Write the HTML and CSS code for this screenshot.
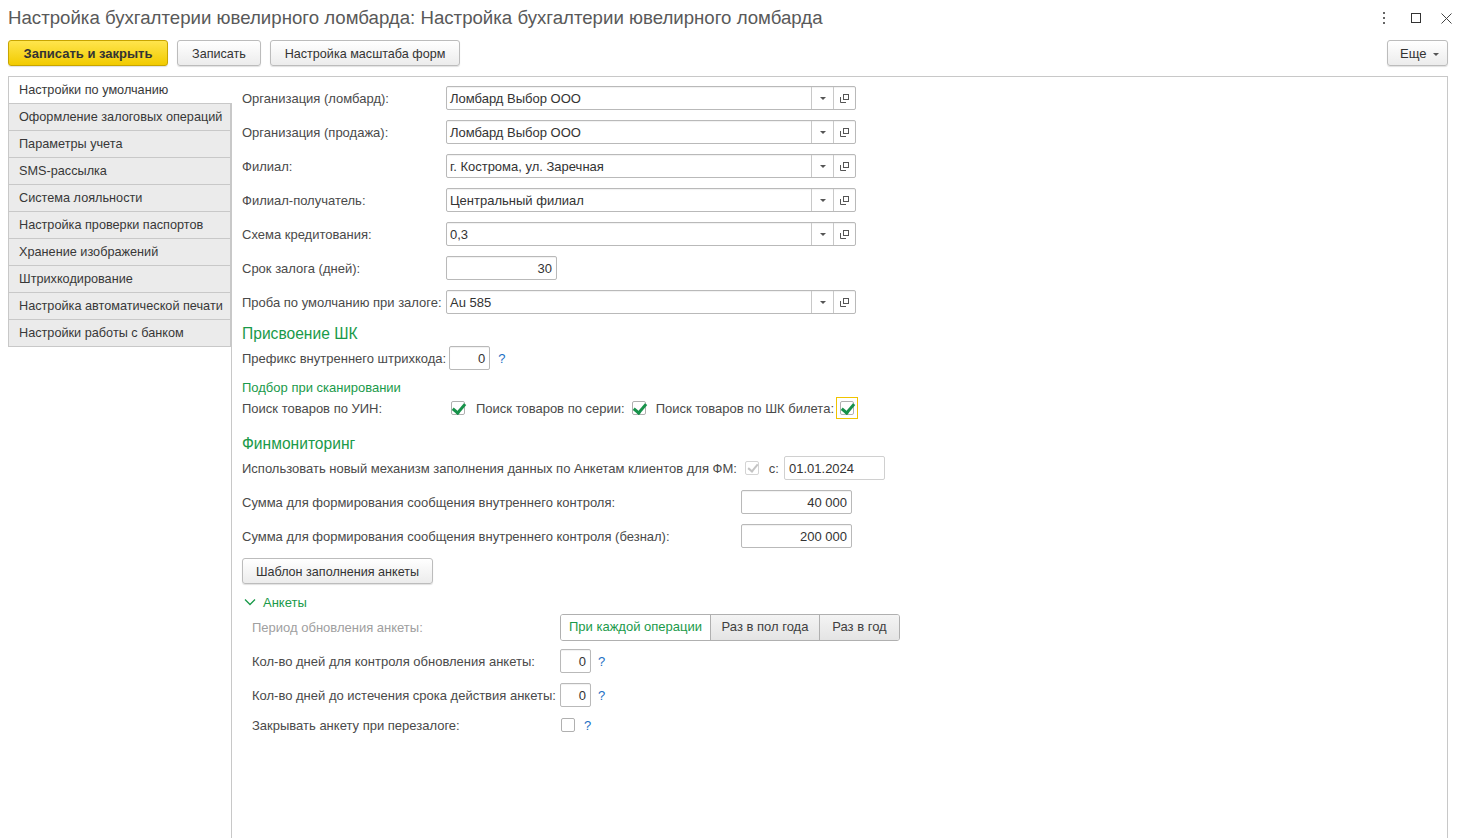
FILE: index.html
```html
<!DOCTYPE html>
<html lang="ru">
<head>
<meta charset="utf-8">
<title>Настройка бухгалтерии ювелирного ломбарда</title>
<link rel="stylesheet" href="styles.css">
</head>
<body>
<div class="titlebar">
  <div class="title">Настройка бухгалтерии ювелирного ломбарда: Настройка бухгалтерии ювелирного ломбарда</div>
  <div class="winctl">
    <svg class="ic-kebab" width="4" height="12" viewBox="0 0 4 12"><rect x="1" y="0" width="2" height="2" fill="#666"/><rect x="1" y="5" width="2" height="2" fill="#666"/><rect x="1" y="10" width="2" height="2" fill="#666"/></svg>
    <svg class="ic-max" width="10" height="10" viewBox="0 0 10 10"><rect x="0.5" y="0.5" width="9" height="9" fill="none" stroke="#333"/></svg>
    <svg class="ic-close" width="11" height="11" viewBox="0 0 11 11"><path d="M0.5 0.5L10.5 10.5M10.5 0.5L0.5 10.5" stroke="#444" stroke-width="1"/></svg>
  </div>
</div>

<div class="toolbar">
  <button class="btn btn-primary">Записать и закрыть</button>
  <button class="btn btn-save">Записать</button>
  <button class="btn btn-scale">Настройка масштаба форм</button>
  <div class="spacer"></div>
  <button class="btn btn-more">Еще <span class="caret"></span></button>
</div>

<div class="main">
  <div class="tabs">
    <div class="tab active">Настройки по умолчанию</div>
    <div class="tab">Оформление залоговых операций</div>
    <div class="tab">Параметры учета</div>
    <div class="tab">SMS-рассылка</div>
    <div class="tab">Система лояльности</div>
    <div class="tab">Настройка проверки паспортов</div>
    <div class="tab">Хранение изображений</div>
    <div class="tab">Штрихкодирование</div>
    <div class="tab">Настройка автоматической печати</div>
    <div class="tab">Настройки работы с банком</div>
  </div>

  <div class="panel">
    <div class="row">
      <div class="label w204">Организация (ломбард):</div>
      <div class="combo"><span class="val">Ломбард Выбор ООО</span><span class="cbtn"><i class="tri"></i></span><span class="cbtn"><svg width="9" height="9" viewBox="0 0 9 9"><rect x="3.5" y="0.5" width="5" height="5" fill="none" stroke="#555"/><path d="M0.5 3v5.5H6" fill="none" stroke="#555"/></svg></span></div>
    </div>
    <div class="row">
      <div class="label w204">Организация (продажа):</div>
      <div class="combo"><span class="val">Ломбард Выбор ООО</span><span class="cbtn"><i class="tri"></i></span><span class="cbtn"><svg width="9" height="9" viewBox="0 0 9 9"><rect x="3.5" y="0.5" width="5" height="5" fill="none" stroke="#555"/><path d="M0.5 3v5.5H6" fill="none" stroke="#555"/></svg></span></div>
    </div>
    <div class="row">
      <div class="label w204">Филиал:</div>
      <div class="combo"><span class="val">г. Кострома, ул. Заречная</span><span class="cbtn"><i class="tri"></i></span><span class="cbtn"><svg width="9" height="9" viewBox="0 0 9 9"><rect x="3.5" y="0.5" width="5" height="5" fill="none" stroke="#555"/><path d="M0.5 3v5.5H6" fill="none" stroke="#555"/></svg></span></div>
    </div>
    <div class="row">
      <div class="label w204">Филиал-получатель:</div>
      <div class="combo"><span class="val">Центральный филиал</span><span class="cbtn"><i class="tri"></i></span><span class="cbtn"><svg width="9" height="9" viewBox="0 0 9 9"><rect x="3.5" y="0.5" width="5" height="5" fill="none" stroke="#555"/><path d="M0.5 3v5.5H6" fill="none" stroke="#555"/></svg></span></div>
    </div>
    <div class="row">
      <div class="label w204">Схема кредитования:</div>
      <div class="combo"><span class="val">0,3</span><span class="cbtn"><i class="tri"></i></span><span class="cbtn"><svg width="9" height="9" viewBox="0 0 9 9"><rect x="3.5" y="0.5" width="5" height="5" fill="none" stroke="#555"/><path d="M0.5 3v5.5H6" fill="none" stroke="#555"/></svg></span></div>
    </div>
    <div class="row">
      <div class="label w204">Срок залога (дней):</div>
      <div class="input num w111">30</div>
    </div>
    <div class="row">
      <div class="label w204">Проба по умолчанию при залоге:</div>
      <div class="combo"><span class="val">Au 585</span><span class="cbtn"><i class="tri"></i></span><span class="cbtn"><svg width="9" height="9" viewBox="0 0 9 9"><rect x="3.5" y="0.5" width="5" height="5" fill="none" stroke="#555"/><path d="M0.5 3v5.5H6" fill="none" stroke="#555"/></svg></span></div>
    </div>

    <div class="heading h-shk">Присвоение ШК</div>
    <div class="row r24">
      <div class="label">Префикс внутреннего штрихкода:</div>
      <div class="input num w41 ml3">0</div>
      <span class="help ml8">?</span>
    </div>

    <div class="subheading">Подбор при сканировании</div>
    <div class="row r22">
      <div class="label w209">Поиск товаров по УИН:</div>
      <span class="chk on"></span>
      <div class="label ml11">Поиск товаров по серии:</div>
      <span class="chk on ml7"></span>
      <div class="label ml10">Поиск товаров по ШК билета:</div>
      <span class="chkwrap ml2"><span class="chk on"></span></span>
    </div>

    <div class="heading h-fm">Финмониторинг</div>
    <div class="row r24">
      <div class="label">Использовать новый механизм заполнения данных по Анкетам клиентов для ФМ:</div>
      <span class="chk dis ml8"></span>
      <div class="label ml10">с:</div>
      <div class="input flat w101 ml5">01.01.2024</div>
    </div>
    <div class="row r34 mt5">
      <div class="label w499">Сумма для формирования сообщения внутреннего контроля:</div>
      <div class="input num w111">40 000</div>
    </div>
    <div class="row r34">
      <div class="label w499">Сумма для формирования сообщения внутреннего контроля (безнал):</div>
      <div class="input num w111">200 000</div>
    </div>
    <div class="btnrow">
      <button class="btn btn-tpl">Шаблон заполнения анкеты</button>
    </div>

    <div class="group-title">
      <svg width="12" height="8" viewBox="0 0 12 8"><path d="M1 1.5l5 5 5-5" fill="none" stroke="#1a9a4a" stroke-width="1.3"/></svg>
      <span>Анкеты</span>
    </div>
    <div class="group">
      <div class="row r27 mt2">
        <div class="label w308 dim">Период обновления анкеты:</div>
        <div class="seg">
          <span class="seg-item sel s1">При каждой операции</span>
          <span class="seg-item s2">Раз в пол года</span>
          <span class="seg-item s3">Раз в год</span>
        </div>
      </div>
      <div class="row r34 mt3">
        <div class="label w308">Кол-во дней для контроля обновления анкеты:</div>
        <div class="input num w31">0</div>
        <span class="help ml7">?</span>
      </div>
      <div class="row r34">
        <div class="label w308">Кол-во дней до истечения срока действия анкеты:</div>
        <div class="input num w31">0</div>
        <span class="help ml7">?</span>
      </div>
      <div class="row r26">
        <div class="label w309">Закрывать анкету при перезалоге:</div>
        <span class="chk"></span>
        <span class="help ml9">?</span>
      </div>
    </div>
  </div>
</div>
</body>
</html>
```

FILE: styles.css
```css
html, body {
  margin: 0;
  padding: 0;
  height: 100%;
  overflow: hidden;
  background: #fff;
}
body {
  font-family: "Liberation Sans", Arial, sans-serif;
  font-size: 13px;
  color: #4a4a4a;
}

.titlebar {
  display: flex;
  align-items: center;
  height: 36px;
  padding: 0 12px 0 8px;
}
.title {
  flex: 1;
  font-size: 18.65px;
  color: #595959;
  white-space: nowrap;
}
.winctl {
  display: flex;
  align-items: center;
}
.ic-kebab { margin-right: 25px; }
.ic-max { margin-right: 20px; }

.toolbar {
  display: flex;
  align-items: center;
  padding: 4px 16px 0 8px;
  height: 26px;
}
.spacer { flex: 1; }

.btn {
  height: 26px;
  font-family: "Liberation Sans", Arial, sans-serif;
  font-size: 12.6px;
  line-height: 26px;
  color: #333;
  background: linear-gradient(#ffffff, #ececec);
  border: 1px solid #bcbcbc;
  border-radius: 3px;
  box-shadow: 0 1px 1px rgba(0,0,0,0.12);
  padding: 0 13px;
  margin-right: 9px;
  cursor: default;
}
.btn-primary {
  background: linear-gradient(#ffe54d, #f2cb00);
  border-color: #c8a500;
  font-weight: bold;
  font-size: 13px;
  color: #333;
  width: 160px;
  padding: 0;
  margin-right: 9px;
}
.btn-save { width: 84px; padding: 0; }
.btn-scale { width: 190px; padding: 0; }
.btn-more {
  margin-right: 0;
  width: 61px;
  padding: 0 0 0 12px;
  text-align: left;
  font-size: 13px;
}
.caret {
  display: inline-block;
  width: 0; height: 0;
  border-left: 3px solid transparent;
  border-right: 3px solid transparent;
  border-top: 3px solid #555;
  vertical-align: middle;
  margin-left: 3px;
}

.main {
  display: flex;
  margin-top: 10px;
  padding-left: 8px;
  height: calc(100% - 76px);
}
.tabs {
  width: 223px;
  flex: none;
}
.tab {
  height: 26px;
  line-height: 26px;
  padding-left: 10px;
  font-size: 12.7px;
  background: #ebebeb;
  border: 1px solid #c8c8c8;
  border-top: none;
  color: #383838;
  white-space: nowrap;
}
.tab.active {
  background: #fff;
  border-top: 1px solid #c8c8c8;
  border-right: none;
  position: relative;
  z-index: 1;
  margin-right: -1px;
}

.panel {
  width: 1217px;
  border: 1px solid #c8c8c8;
  border-bottom: none;
  padding: 4px 0 0 10px;
  box-sizing: border-box;
}

.row {
  display: flex;
  align-items: center;
  height: 34px;
  white-space: nowrap;
}
.r22 { height: 22px; }
.r24 { height: 24px; }
.r26 { height: 26px; }
.r27 { height: 27px; }
.r34 { height: 34px; }
.label { color: #4a4a4a; }
.dim { color: #a0a0a0; }
.w204 { width: 204px; flex: none; }
.w209 { width: 209px; flex: none; }
.w308 { width: 308px; flex: none; }
.w309 { width: 309px; flex: none; }
.w499 { width: 499px; flex: none; }

.ml2 { margin-left: 2px; }
.ml3 { margin-left: 3px; }
.ml5 { margin-left: 5px; }
.ml7 { margin-left: 7px; }
.ml8 { margin-left: 8px; }
.ml9 { margin-left: 9px; }
.ml10 { margin-left: 10px; }
.ml11 { margin-left: 11px; }
.mt2 { margin-top: 2px; }
.mt3 { margin-top: 3px; }
.mt5 { margin-top: 5px; }

.combo {
  display: flex;
  width: 410px;
  height: 24px;
  border: 1px solid #b9b9b9;
  border-radius: 2px;
  box-sizing: border-box;
  box-shadow: inset 0 1px 1px rgba(0,0,0,0.06);
}
.combo .val {
  flex: 1;
  line-height: 23px;
  padding-left: 3px;
  color: #333;
}
.cbtn {
  width: 21px;
  border-left: 1px solid #c8c8c8;
  display: flex;
  align-items: center;
  justify-content: center;
}
.tri {
  display: block;
  width: 0; height: 0;
  border-left: 3px solid transparent;
  border-right: 3px solid transparent;
  border-top: 3px solid #555;
}

.input {
  height: 24px;
  line-height: 23px;
  border: 1px solid #b9b9b9;
  border-radius: 2px;
  box-sizing: border-box;
  padding: 0 4px;
  color: #333;
  box-shadow: inset 0 1px 1px rgba(0,0,0,0.06);
}
.input.flat { border-color: #d0d0d0; box-shadow: none; }
.num { text-align: right; }
.w111 { width: 111px; }
.w101 { width: 101px; }
.w41 { width: 41px; }
.w31 { width: 31px; }

.help {
  color: #1c6fc4;
  font-size: 13px;
}

.heading {
  color: #1a9a4a;
  font-size: 15.6px;
  white-space: nowrap;
}
.h-shk {
  height: 27px;
  line-height: 29px;
}
.h-fm {
  height: 25px;
  line-height: 25px;
  margin-top: 12px;
}
.subheading {
  color: #1a9a4a;
  margin-top: 7px;
  height: 20px;
  line-height: 22px;
}

.chk {
  display: inline-block;
  width: 14px;
  height: 14px;
  border: 1px solid #b0b0b0;
  border-radius: 2px;
  box-sizing: border-box;
  position: relative;
  background: #fff;
  flex: none;
}
.chk.on::after {
  content: "";
  position: absolute;
  left: 3px;
  top: -1px;
  width: 5px;
  height: 10px;
  border-right: 3px solid #17924a;
  border-bottom: 3px solid #17924a;
  transform: rotate(40deg);
}
.chk.dis {
  border-color: #d4d4d4;
}
.chk.dis::after {
  content: "";
  position: absolute;
  left: 4px;
  top: 0px;
  width: 4px;
  height: 8px;
  border-right: 2px solid #c4c4c4;
  border-bottom: 2px solid #c4c4c4;
  transform: rotate(40deg);
}
.chkwrap {
  display: inline-flex;
  align-items: center;
  justify-content: center;
  width: 22px;
  height: 22px;
  box-sizing: border-box;
  border: 1px solid #f0c400;
}

.btnrow {
  margin-top: 5px;
  height: 26px;
  display: flex;
}
.btn-tpl { width: 191px; padding: 0; }

.group-title {
  margin-top: 8px;
  height: 20px;
  display: flex;
  align-items: center;
  color: #1a9a4a;
  padding-left: 2px;
}
.group-title svg { margin-right: 7px; }

.group { padding-left: 10px; }

.seg {
  display: flex;
  height: 25px;
  border: 1px solid #b0b0b0;
  border-radius: 3px;
  overflow: hidden;
}
.seg-item {
  line-height: 24px;
  text-align: center;
  background: linear-gradient(#f4f4f4, #e4e4e4);
  color: #404040;
  border-left: 1px solid #b0b0b0;
  box-sizing: border-box;
}
.seg-item.s1 { width: 149px; border-left: none; }
.seg-item.s2 { width: 109px; }
.seg-item.s3 { width: 80px; }
.seg-item.sel {
  background: #fff;
  color: #1a9a4a;
}
```
